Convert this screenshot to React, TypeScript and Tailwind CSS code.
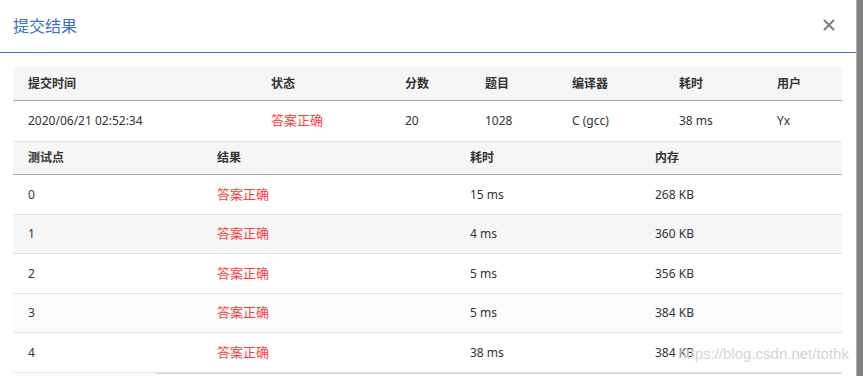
const summaryCols = "grid grid-cols-[243px_134px_80px_87px_107px_98px_80px]";
const caseCols = "grid grid-cols-[189px_253px_185px_202px]";

const cases = [
  { id: "0", time: "15 ms", mem: "268 KB" },
  { id: "1", time: "4 ms", mem: "360 KB" },
  { id: "2", time: "5 ms", mem: "356 KB" },
  { id: "3", time: "5 ms", mem: "384 KB" },
  { id: "4", time: "38 ms", mem: "384 KB" },
];

// alternating bg and row heights, as in the screenshot
const rowStyle = [
  "bg-white h-[40px]",
  "bg-[#f6f6f6] h-[39px]",
  "bg-white h-[40px]",
  "bg-[#fbfbfb] h-[39px]",
  "bg-white h-[40px]",
];

const Cell = ({ children, red }: { children: React.ReactNode; red?: boolean }) => (
  <div className={red ? "pl-[15px] text-[13px] text-[#fb3c3c]" : "pl-[15px]"}>{children}</div>
);

export default function App() {
  return (
    <div
      className="flex w-[863px] h-[376px] overflow-hidden bg-[#808080] text-[12px] text-[#333]"
      style={{ fontFamily: '"Noto Sans", "Noto Sans CJK SC", sans-serif' }}
    >
      <div className="relative w-[856px] h-full bg-white">
        <div className="flex items-center justify-between h-[53px] pl-[13px] pr-[21px] border-b border-[#3a6fd1]">
          <h4 className="text-[16px] text-[#3d6fcf] -mt-[1px]">提交结果</h4>
          <svg width="12" height="12" viewBox="0 0 12 12" className="-mt-[3px]">
            <path d="M1.5 1.5 L10.5 10.5 M10.5 1.5 L1.5 10.5" stroke="#808080" strokeWidth="2.1" strokeLinecap="round" />
          </svg>
        </div>

        <div className="ml-[13px] mt-[14px] w-[829px]">
          <div className={`${summaryCols} items-center h-[34px] bg-[#f6f6f6] border-b border-[#aaa] font-bold`}>
            <Cell>提交时间</Cell>
            <Cell>状态</Cell>
            <Cell>分数</Cell>
            <Cell>题目</Cell>
            <Cell>编译器</Cell>
            <Cell>耗时</Cell>
            <Cell>用户</Cell>
          </div>
          <div className={`${summaryCols} items-center h-[40px]`}>
            <Cell>2020/06/21 02:52:34</Cell>
            <Cell red>答案正确</Cell>
            <Cell>20</Cell>
            <Cell>1028</Cell>
            <Cell>C (gcc)</Cell>
            <Cell>38 ms</Cell>
            <Cell>Yx</Cell>
          </div>

          <div className={`${caseCols} items-center h-[34px] bg-[#f6f6f6] border-t border-b border-t-[#e6e6e6] border-b-[#aaa] font-bold`}>
            <Cell>测试点</Cell>
            <Cell>结果</Cell>
            <Cell>耗时</Cell>
            <Cell>内存</Cell>
          </div>
          {cases.map((c, i) => (
            <div
              key={c.id}
              className={`${caseCols} items-center border-b border-[#e3e3e3] ${rowStyle[i]}`}
            >
              <Cell>{c.id}</Cell>
              <Cell red>答案正确</Cell>
              <Cell>{c.time}</Cell>
              <Cell>{c.mem}</Cell>
            </div>
          ))}
          <div className="ml-[143px] h-[2px] border-t border-[#d6d6d6]" />
        </div>

        <div
          className="absolute left-[678px] top-[343px] text-[15px] text-[#d4d4d4]"
          style={{ fontFamily: '"Liberation Sans", sans-serif' }}
        >
          https://blog.csdn.net/tothk
        </div>
      </div>
      <div className="w-[1px] h-full bg-[#b0b0b0]" />
    </div>
  );
}
